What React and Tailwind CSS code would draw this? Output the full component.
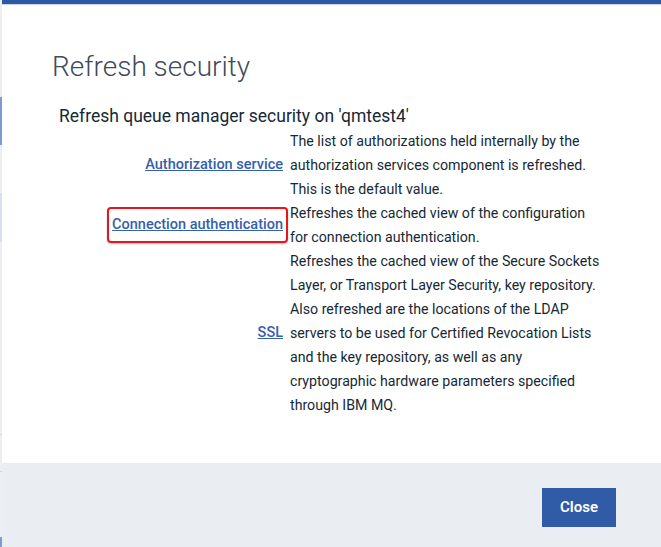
import React from "react";

const rows = [
  {
    name: "Authorization service",
    lines: [
      "The list of authorizations held internally by the",
      "authorization services component is refreshed.",
      "This is the default value.",
    ],
  },
  {
    name: "Connection authentication",
    focused: true,
    lines: [
      "Refreshes the cached view of the configuration",
      "for connection authentication.",
    ],
  },
  {
    name: "SSL",
    lines: [
      "Refreshes the cached view of the Secure Sockets",
      "Layer, or Transport Layer Security, key repository.",
      "Also refreshed are the locations of the LDAP",
      "servers to be used for Certified Revocation Lists",
      "and the key repository, as well as any",
      "cryptographic hardware parameters specified",
      "through IBM MQ.",
    ],
  },
];

export default function App() {
  return (
    <div
      className="flex h-[547px] w-[661px] overflow-hidden bg-white"
      style={{ fontFamily: 'Roboto, "Noto Sans", sans-serif' }}
    >
      {/* page behind the modal */}
      <div className="flex w-[2px] flex-col bg-[#eceef2]">
        <div className="h-[97px]" />
        <div className="h-[48px] bg-[#7d9ccc]" />
        <div className="h-[48px]" />
        <div className="h-[49px] bg-[#d6e0ee]" />
        <div className="h-[192px]" />
        <div className="h-px bg-[#d3d6dc]" />
        <div className="h-[36px]" />
        <div className="h-px bg-[#d3d6dc]" />
        <div className="flex-1" />
        <div className="h-[10px] bg-[#7d9ccc]" />
      </div>

      <div className="flex flex-1 flex-col">
        <div className="h-[4px] bg-[#2d58a4]" />
        <div className="h-px bg-[#c7d3e8]" />

        <div className="flex-1">
          <h1 className="mt-[44px] pl-[50px] text-[28px] font-light leading-[36px] text-[#3f4b57]">
            Refresh security
          </h1>
          <p className="mt-[19px] pl-[57px] text-[17.5px] leading-[24px] text-[#152935]">
            Refresh queue manager security on 'qmtest4'
          </p>

          <div className="mt-[1px] grid grid-cols-[224px_1fr] gap-x-[7px] pl-[57px] text-[14.2px] leading-[24px] text-[#152935]">
            {rows.map((row) => (
              <React.Fragment key={row.name}>
                <div className="flex items-center justify-end">
                  <a
                    href="#"
                    className={
                      row.focused
                        ? "-mr-[5px] rounded-[4px] border-2 border-[#e5161f] px-[3px] py-[4px] text-[14.5px] font-medium text-[#3560ad] underline shadow-[0_1px_2px_rgba(0,0,0,0.25)]"
                        : "text-[14.5px] font-medium text-[#3560ad] underline"
                    }
                  >
                    {row.name}
                  </a>
                </div>
                <div>
                  {row.lines.map((l) => (
                    <div key={l} className="whitespace-nowrap">
                      {l}
                    </div>
                  ))}
                </div>
              </React.Fragment>
            ))}
          </div>
        </div>

        <div className="flex h-[84px] justify-end bg-[#eaeef3] pr-[45px] pt-[25px]">
          <button className="h-[39px] w-[74px] bg-[#2f5ba7] text-[15px] font-semibold text-white">
            Close
          </button>
        </div>
      </div>
    </div>
  );
}
